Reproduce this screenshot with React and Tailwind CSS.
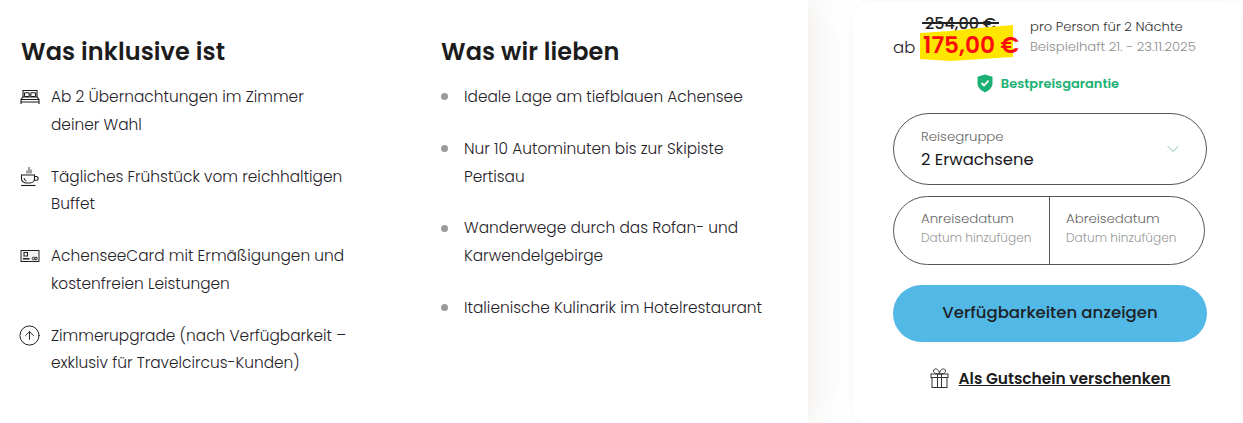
import React from 'react';
import { ChevronDown, CircleArrowUp } from 'lucide-react';

const included = [
    { icon: 'bed', text: ['Ab 2 Übernachtungen im Zimmer', 'deiner Wahl'] },
    { icon: 'cup', text: ['Tägliches Frühstück vom reichhaltigen', 'Buffet'] },
    { icon: 'card', text: ['AchenseeCard mit Ermäßigungen und', 'kostenfreien Leistungen'] },
    { icon: 'up', text: ['Zimmerupgrade (nach Verfügbarkeit –', 'exklusiv für Travelcircus-Kunden)'] },
];

const loved = [
    ['Ideale Lage am tiefblauen Achensee'],
    ['Nur 10 Autominuten bis zur Skipiste', 'Pertisau'],
    ['Wanderwege durch das Rofan- und', 'Karwendelgebirge'],
    ['Italienische Kulinarik im Hotelrestaurant'],
];

const BedIcon = () => (
    <svg width="20" height="16" viewBox="0 0 20 16" fill="none" stroke="#1a1a1a" strokeWidth="1.1">
        <path d="M3 8V1.500h14V8" />
        <rect x="4.500" y="3.800" width="4.700" height="3.700" rx="0.800" />
        <rect x="10.800" y="3.800" width="4.700" height="3.700" rx="0.800" />
        <path d="M1 15V10.500L3 8h14l2 2.500V15" />
        <path d="M1 10.500h18M1 13h18" />
    </svg>
);

const CupIcon = () => (
    <svg width="20" height="21" viewBox="0 0 20 21" fill="none" stroke="#1a1a1a" strokeWidth="1.1">
        <path d="M7 7.500V4.500M9 7.500V1M11 7.500V3.500" stroke="#555" />
        <path d="M1.500 9h13v3.500c0 2.500-2 4.500-4.500 4.500H6c-2.500 0-4.500-2-4.500-4.500z" />
        <path d="M14.500 10.500h1.800a1.900 1.900 0 0 1 0 3.800H14" />
        <path d="M1 19.500h14.500" />
        <path d="M4 12c.3 1.500 1 2.500 2.500 3" />
    </svg>
);

const CardIcon = () => (
    <svg width="20" height="14" viewBox="0 0 20 14" fill="none" stroke="#222" strokeWidth="1">
        <rect x="1" y="1.500" width="18" height="11" fill="#f2f2f2" />
        <rect x="4" y="3.500" width="3.500" height="3.500" />
        <path d="M3 9.800h6.500" strokeWidth="1.500" />
        <circle cx="13.500" cy="9.500" r="1.300" />
        <circle cx="16" cy="9.500" r="1.300" />
    </svg>
);

const GiftIcon = () => (
    <svg width="19" height="20" viewBox="0 0 19 20" fill="none" stroke="#333" strokeWidth="1">
        <rect x="1" y="6" width="17" height="3.500" />
        <rect x="2" y="9.500" width="15" height="10" />
        <path d="M7.500 6v13.500M11.500 6v13.500" />
        <path d="M9.500 6C6 6 3.500 5 3.500 3c0-1.500 1.500-2.500 3-2 1.500.5 3 2.500 3 5z" />
        <path d="M9.500 6c3.500 0 6-1 6-3 0-1.500-1.500-2.500-3-2-1.500.5-3 2.500-3 5z" />
    </svg>
);

const itemIcon = (name) => {
    if (name === 'bed') return <BedIcon />;
    if (name === 'cup') return <CupIcon />;
    if (name === 'card') return <CardIcon />;
    return <span className="-ml-[2px]"><CircleArrowUp size={23} strokeWidth={1} color="#1a1a1a" /></span>;
};

const ShieldIcon = () => (
    <svg width="16" height="19" viewBox="0 0 16 19">
        <path d="M8 0.500l7.500 2.300v6.500c0 4-3 7-7.500 9.200C3.500 16.300 0.500 13.300 0.500 9.300V2.800z" fill="#1cb074" />
        <path d="M4.500 9l2.500 2.500 4.500-4.800" fill="none" stroke="#fff" strokeWidth="1.800" />
    </svg>
);

const App = () => {
    return (
        <div className="flex h-[423px] w-[1243px] overflow-hidden bg-white font-['Poppins','Inter',sans-serif] text-[#1f2228]">
            {/* Left panel */}
            <div className="flex h-[423px] w-[808px] shrink-0 bg-white pl-[21px] pt-[36px] shadow-[0_0_40px_rgba(120,100,80,0.16)]">
                <div className="w-[420px]">
                    <h2 className="text-[24px] leading-[32px] font-semibold tracking-[0.1px] text-[#1c1c1c]">Was inklusive ist</h2>
                    <ul className="mt-[15px] flex flex-col gap-[24px]">
                        {included.map((item) => (
                            <li key={item.icon} className="flex">
                                <span className="-ml-[1px] flex h-[27.750px] w-[31px] shrink-0 items-center">{itemIcon(item.icon)}</span>
                                <p className="text-[15.360px] leading-[27.750px] font-light">
                                    {item.text[0]}<br />{item.text[1]}
                                </p>
                            </li>
                        ))}
                    </ul>
                </div>
                <div className="flex-1">
                    <h2 className="text-[24px] leading-[32px] font-semibold tracking-[0.1px] text-[#1c1c1c]">Was wir lieben</h2>
                    <ul className="mt-[15px] flex flex-col gap-[24px]">
                        {loved.map((lines) => (
                            <li key={lines[0]} className="flex">
                                <span className="flex h-[27.750px] w-[23px] shrink-0 items-center">
                                    <span className="h-[7px] w-[7px] rounded-full bg-[#9b9b9b]" />
                                </span>
                                <p className="text-[15.360px] leading-[27.750px] font-light">
                                    {lines.map((l, i) => (
                                        <React.Fragment key={l}>{i > 0 && <br />}{l}</React.Fragment>
                                    ))}
                                </p>
                            </li>
                        ))}
                    </ul>
                </div>
            </div>

            {/* Booking card */}
            <div className="ml-[45px] mt-[2px] flex h-[423px] w-[392px] shrink-0 flex-col rounded-[18px] bg-white pl-[40px] shadow-[0_0_12px_rgba(120,100,80,0.06)]">
                <div className="flex h-[61px] w-[314px] items-start">
                    <span className="mt-[36px] w-[27px] text-[16.500px] leading-[20px] font-light">ab</span>
                    <div className="relative h-[61px] w-[110px]">
                        <span className="absolute left-[5px] top-[15px] whitespace-nowrap text-[16px] leading-[13px] font-medium text-[#222]">254,00 €</span>
                        <span className="absolute left-[2px] top-[20px] h-[1.500px] w-[77px] bg-[#222]" />
                        <svg className="absolute left-0 top-[23px]" width="94" height="37" viewBox="0 0 94 37">
                            <path d="M0 8 L30 6 L58 3 L93 0 L93 32 L62 34 L30 36 L0 34 Z" fill="#ffe600" />
                        </svg>
                        <span className="absolute left-[3px] top-[30px] whitespace-nowrap text-[23.200px] leading-[27px] font-semibold text-[#fb0d0d]">175,00 €</span>
                    </div>
                    <div className="mt-[15px] whitespace-nowrap text-[13.200px] leading-[20px] font-light">
                        <div className="text-[#333]">pro Person für 2 Nächte</div>
                        <div className="text-[#8d8d8d]">Beispielhaft 21. - 23.11.2025</div>
                    </div>
                </div>

                <div className="mt-[10px] flex w-[314px] items-center justify-center gap-[8px] pr-[4px]">
                    <ShieldIcon />
                    <span className="text-[13px] leading-[21px] font-semibold text-[#1cb074]">Bestpreisgarantie</span>
                </div>

                <button className="mt-[19px] flex h-[72px] w-[314px] items-center justify-between rounded-full border border-[#555] pl-[27px] pr-[23px] text-left">
                    <span className="pt-[2px]">
                        <span className="block text-[13.300px] leading-[18px] font-light text-[#666]">Reisegruppe</span>
                        <span className="block text-[16.400px] leading-[27px] font-normal text-[#16181c]">2 Erwachsene</span>
                    </span>
                    <ChevronDown size={20} strokeWidth={1} color="#6fb39a" />
                </button>

                <div className="mt-[11px] flex h-[69px] w-[312px] rounded-full border border-[#555]">
                    <div className="flex w-[156px] flex-col border-r border-[#555] pl-[27px] pt-[13px]">
                        <span className="text-[13.300px] leading-[18px] font-light text-[#666]">Anreisedatum</span>
                        <span className="mt-[1px] text-[12.100px] leading-[18px] font-light text-[#999]">Datum hinzufügen</span>
                    </div>
                    <div className="flex flex-1 flex-col pl-[16px] pt-[13px]">
                        <span className="text-[13.300px] leading-[18px] font-light text-[#666]">Abreisedatum</span>
                        <span className="mt-[1px] text-[12.100px] leading-[18px] font-light text-[#999]">Datum hinzufügen</span>
                    </div>
                </div>

                <button className="mt-[20px] h-[57px] w-[314px] rounded-full bg-[#52b8e5] text-[16.500px] font-medium text-[#1d2226]">
                    Verfügbarkeiten anzeigen
                </button>

                <div className="mt-[24px] flex w-[314px] items-center justify-center gap-[10px]">
                    <GiftIcon />
                    <span className="pt-[2px] text-[15.400px] leading-[22px] font-semibold text-[#1c1c1c] underline">Als Gutschein verschenken</span>
                </div>
            </div>
        </div>
    );
};

export default App;
